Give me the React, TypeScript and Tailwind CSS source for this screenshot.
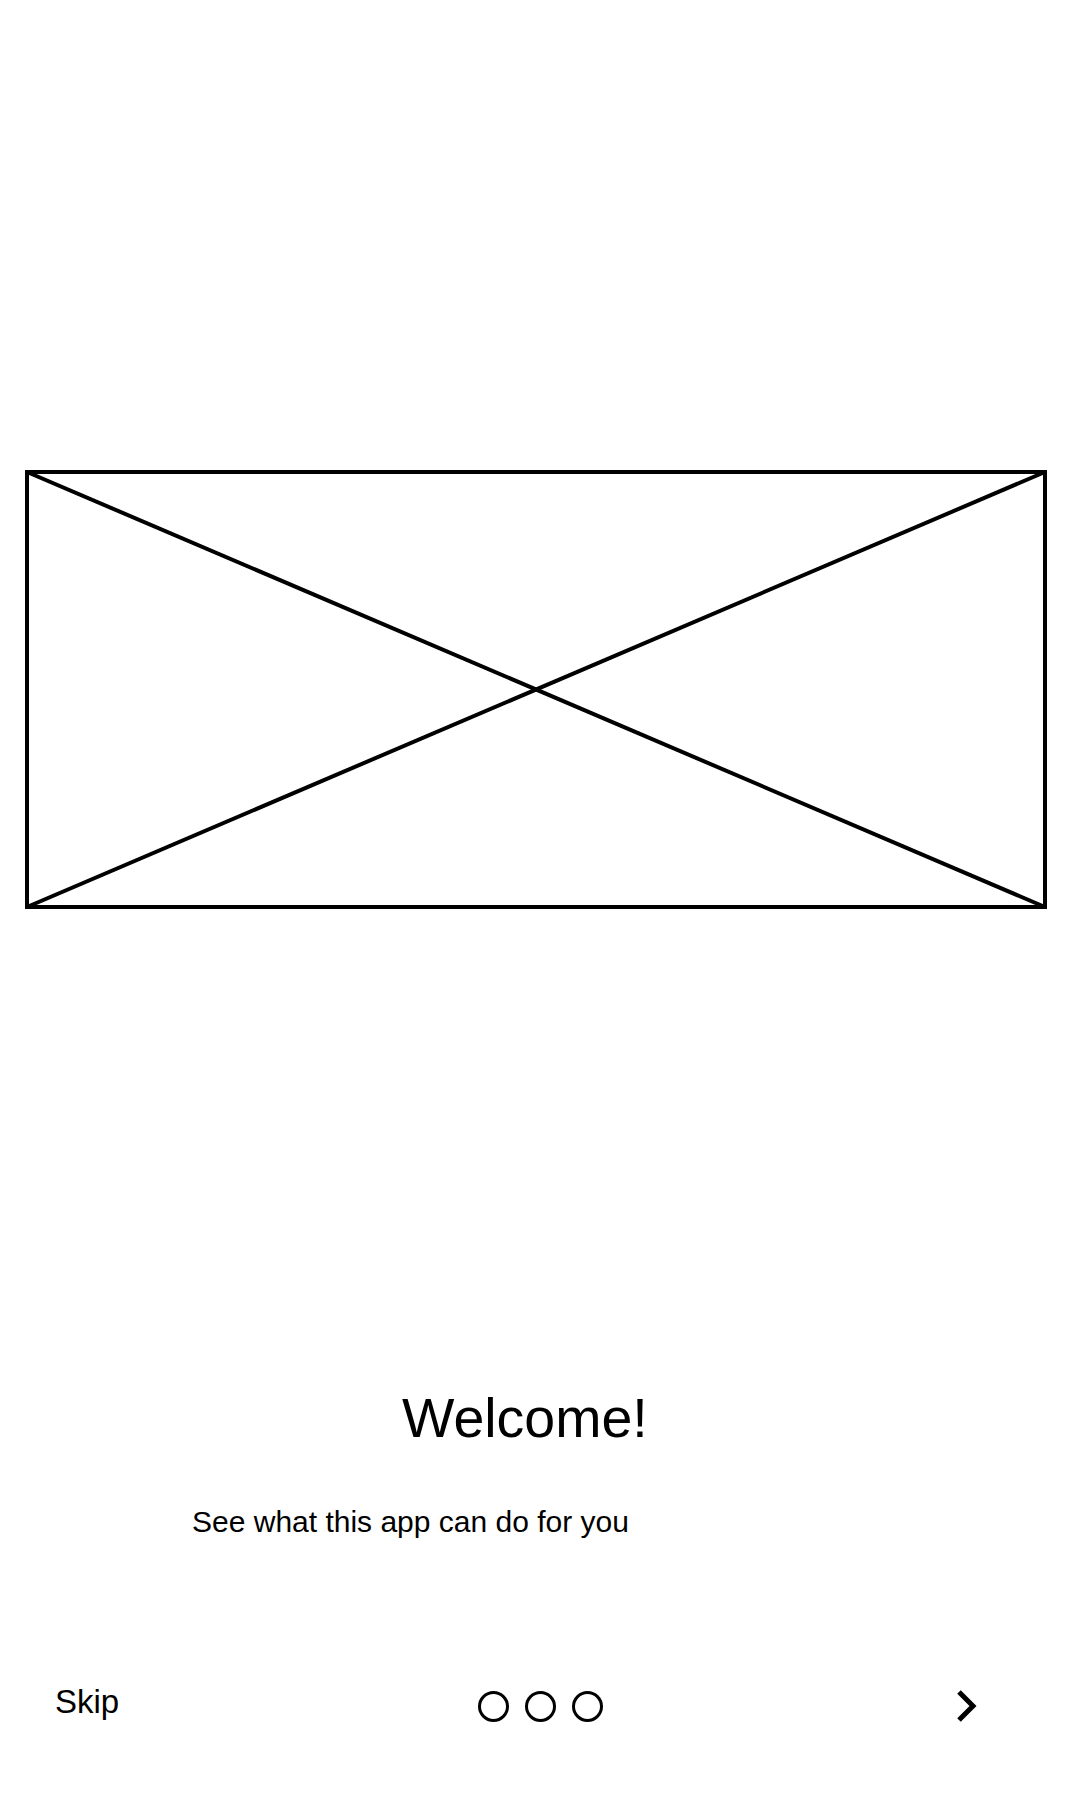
import React from "react";

export default function App() {
  return (
    <div className="w-[1080px] h-[1800px] bg-white text-black flex flex-col" style={{ fontFamily: '"Liberation Sans", Arial, sans-serif' }}>
      <div className="h-[470px]" />
      <div className="ml-[25px] w-[1022px] h-[439px]">
        <svg width="1022" height="439" viewBox="0 0 1022 439" className="block">
          <rect x="2" y="2" width="1018" height="435" fill="none" stroke="#000" strokeWidth="4" />
          <line x1="2" y1="2" x2="1020" y2="437" stroke="#000" strokeWidth="4" />
          <line x1="2" y1="437" x2="1020" y2="2" stroke="#000" strokeWidth="4" />
        </svg>
      </div>
      <div className="mt-[482px] pl-[402px] text-[55.5px] leading-[55px] whitespace-nowrap">Welcome!</div>
      <div className="mt-[61px] pl-[192px] text-[30px] leading-[30px] whitespace-nowrap">See what this app can do for you</div>
      <div className="mt-[148px] h-[42px] flex items-start">
        <div className="ml-[55px] text-[33px] leading-[33px] whitespace-nowrap">Skip</div>
        <div className="ml-[359px] self-center flex gap-[16px]">
          <div className="w-[31px] h-[31px] rounded-full border-[3px] border-black" />
          <div className="w-[31px] h-[31px] rounded-full border-[3px] border-black" />
          <div className="w-[31px] h-[31px] rounded-full border-[3px] border-black" />
        </div>
        <div className="ml-[353px] self-center">
          <svg width="22" height="34" viewBox="0 0 22 34" className="block">
            <polyline points="3,3 17,17 3,31" fill="none" stroke="#000" strokeWidth="5" strokeLinecap="butt" strokeLinejoin="miter" />
          </svg>
        </div>
      </div>
    </div>
  );
}
